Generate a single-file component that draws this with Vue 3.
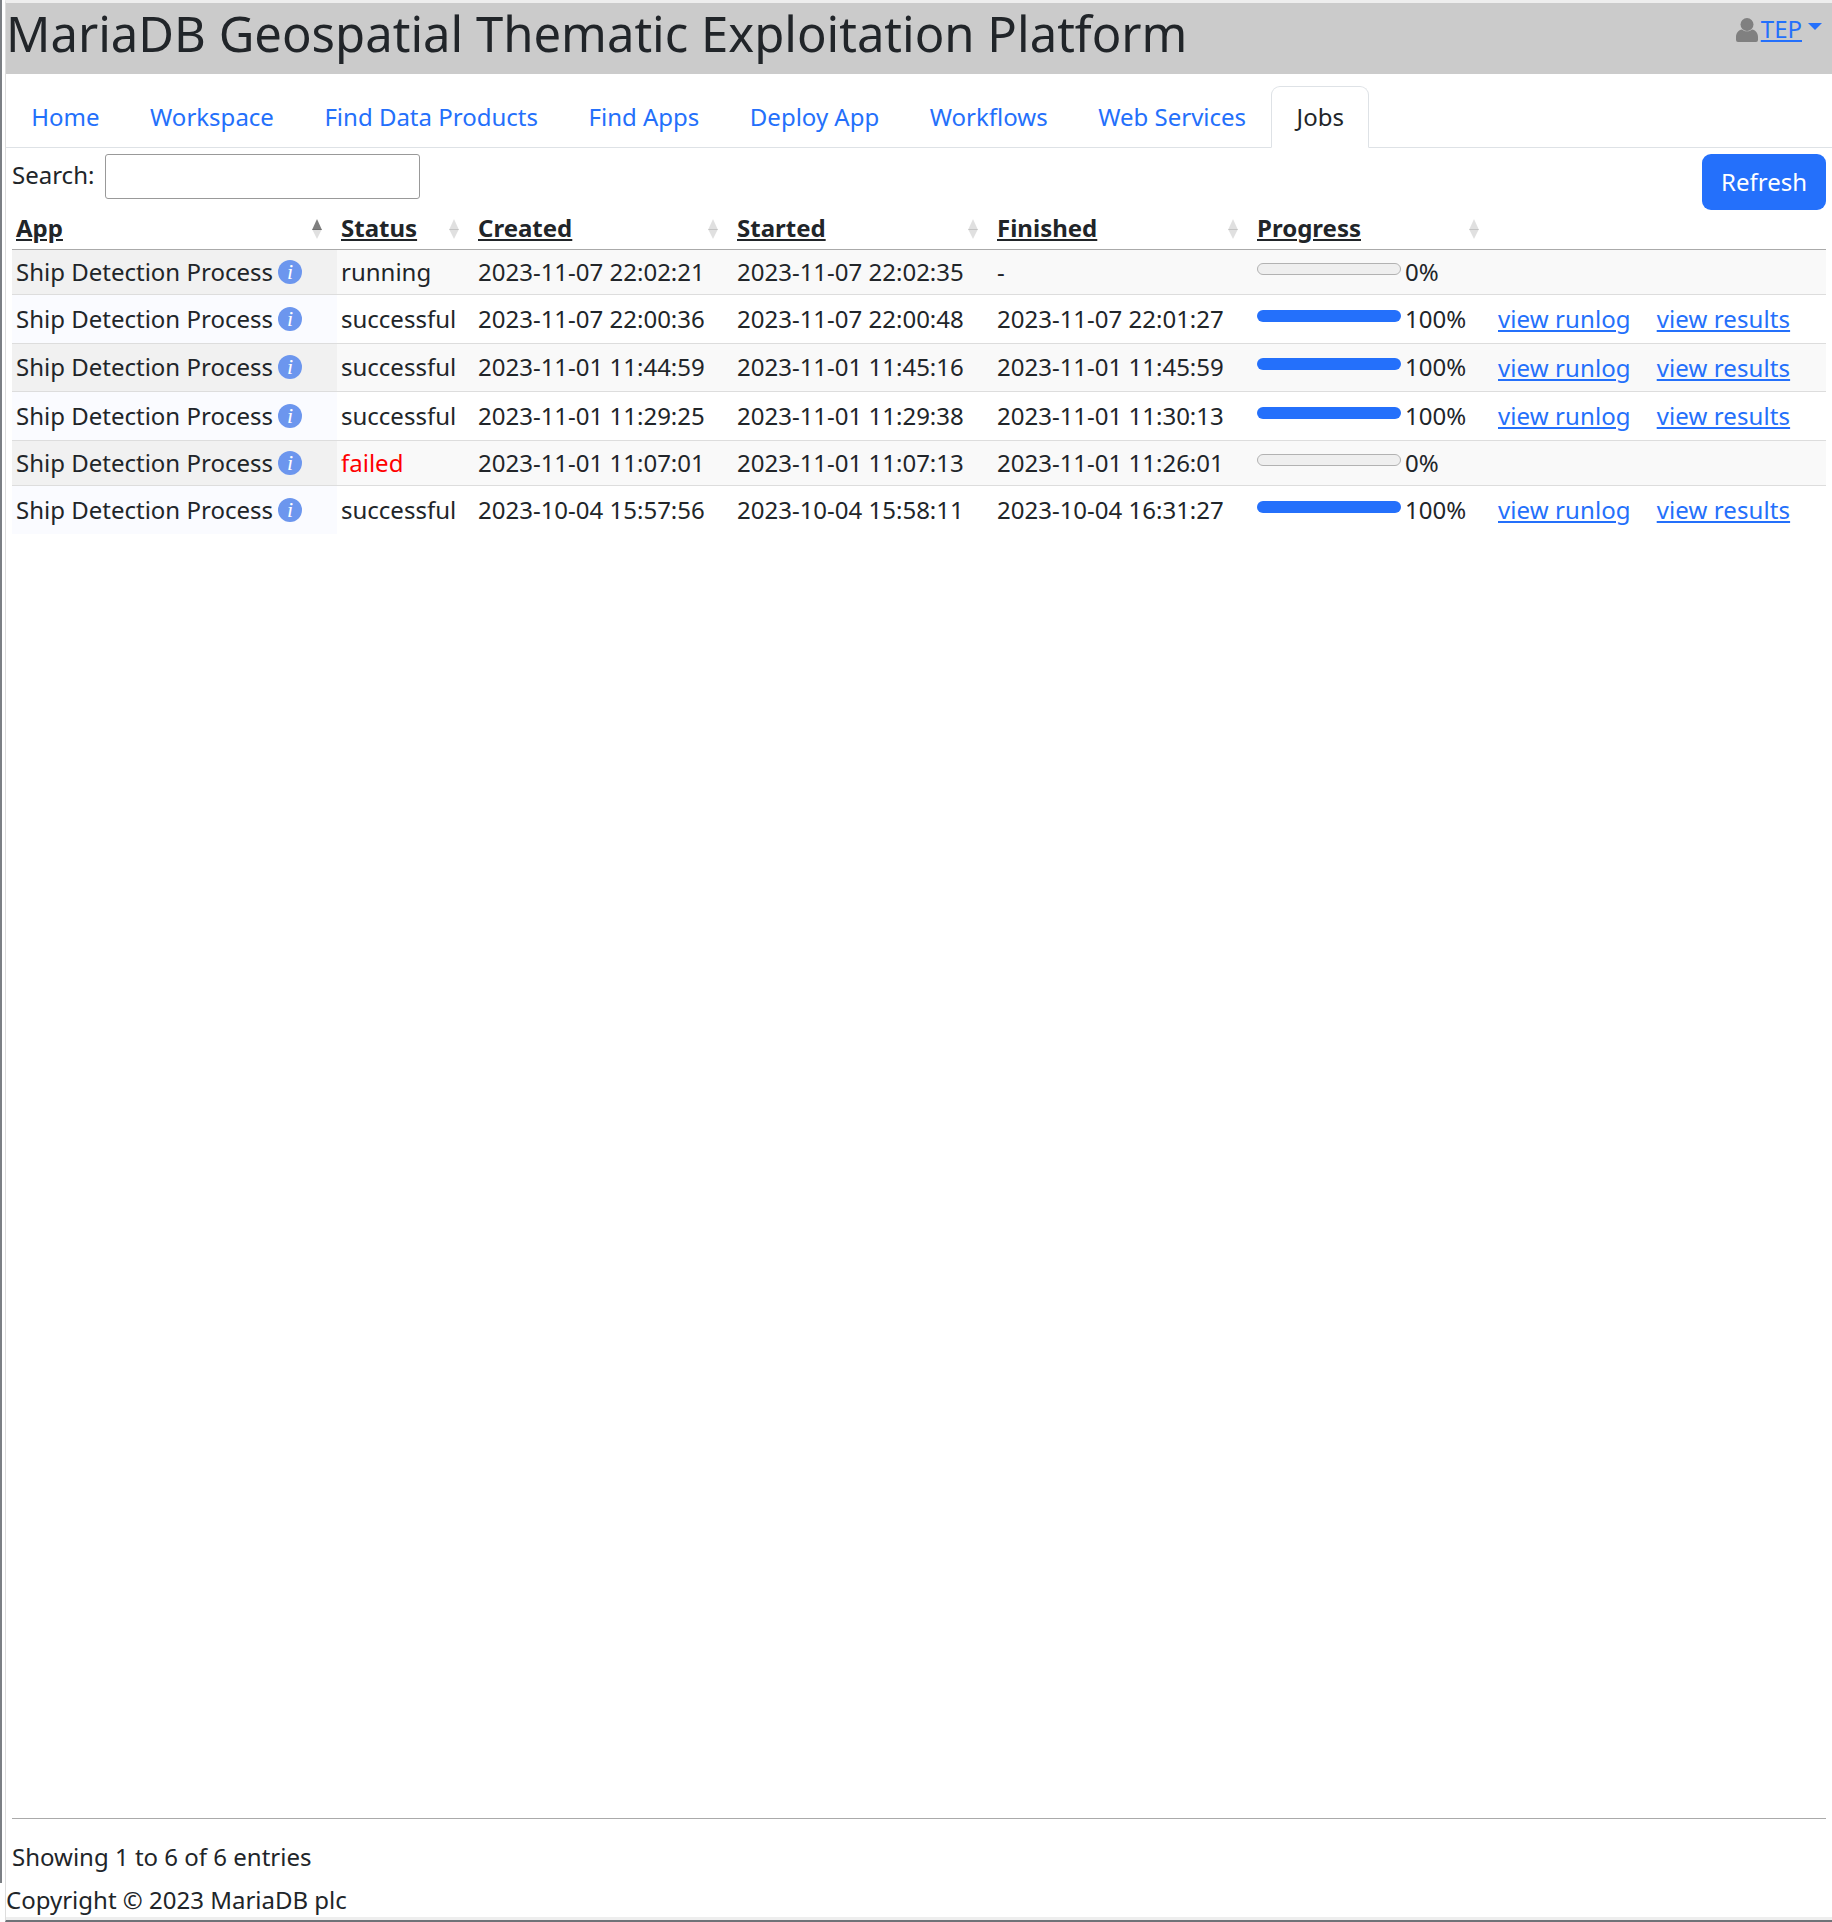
<template>
  <div class="page">
    <header class="top">
      <h1>MariaDB Geospatial Thematic Exploitation Platform</h1>
      <div class="user">
        <svg class="user-icon" viewBox="0 0 22 24" width="22" height="24" aria-hidden="true">
          <circle cx="11" cy="6.500" r="6.500" fill="#808080" />
          <path d="M0 19c0-4 2.500-7 6-7.500 1.500 1.300 3 1.800 5 1.800s3.500-.5 5-1.800c3.500.5 6 3.500 6 7.500v3a2 2 0 0 1-2 2H2a2 2 0 0 1-2-2z" fill="#808080" />
        </svg>
        <a href="#" class="user-link">TEP</a>
        <span class="caret"></span>
      </div>
    </header>

    <nav class="tabs">
      <a
        v-for="tab in tabs"
        :key="tab"
        href="#"
        class="tab"
        :class="{ active: tab === 'Jobs' }"
      >{{ tab }}</a>
    </nav>

    <main class="content">
      <div class="toolbar">
        <label class="search">
          <span class="search-label">Search:</span>
          <input type="search" />
        </label>
        <button type="button" class="refresh">Refresh</button>
      </div>

      <table class="jobs">
        <thead>
          <tr>
            <th v-for="(col, i) in columns" :key="col">
              <template v-if="col">
                <span class="th-label">{{ col }}</span>
                <span class="sort" :class="{ sorted: i === 0 }"></span>
              </template>
            </th>
          </tr>
        </thead>
        <tbody>
          <tr v-for="job in jobs" :key="job.created" :class="{ done: job.progress === 100 }">
            <td class="app">
              <span>Ship Detection Process</span>
              <span class="info">i</span>
            </td>
            <td :class="{ failed: job.status === 'failed' }">{{ job.status }}</td>
            <td>{{ job.created }}</td>
            <td>{{ job.started }}</td>
            <td>{{ job.finished }}</td>
            <td>
              <span class="bar" :class="{ empty: job.progress === 0 }"></span>
              <span class="pct">{{ job.progress }}%</span>
            </td>
            <td class="links">
              <template v-if="job.progress === 100">
                <a href="#">view runlog</a>
                <a href="#">view results</a>
              </template>
            </td>
          </tr>
        </tbody>
      </table>

      <div class="table-info">Showing 1 to 6 of 6 entries</div>
    </main>

    <footer class="copy">Copyright © 2023 MariaDB plc</footer>
  </div>
</template>

<script setup>
const tabs = ['Home', 'Workspace', 'Find Data Products', 'Find Apps', 'Deploy App', 'Workflows', 'Web Services', 'Jobs']

const columns = ['App', 'Status', 'Created', 'Started', 'Finished', 'Progress', '']

const jobs = [
  { status: 'running', created: '2023-11-07 22:02:21', started: '2023-11-07 22:02:35', finished: '-', progress: 0 },
  { status: 'successful', created: '2023-11-07 22:00:36', started: '2023-11-07 22:00:48', finished: '2023-11-07 22:01:27', progress: 100 },
  { status: 'successful', created: '2023-11-01 11:44:59', started: '2023-11-01 11:45:16', finished: '2023-11-01 11:45:59', progress: 100 },
  { status: 'successful', created: '2023-11-01 11:29:25', started: '2023-11-01 11:29:38', finished: '2023-11-01 11:30:13', progress: 100 },
  { status: 'failed', created: '2023-11-01 11:07:01', started: '2023-11-01 11:07:13', finished: '2023-11-01 11:26:01', progress: 0 },
  { status: 'successful', created: '2023-10-04 15:57:56', started: '2023-10-04 15:58:11', finished: '2023-10-04 16:31:27', progress: 100 },
]
</script>

<style>
html,
body {
  margin: 0;
  background: #fff;
}
</style>

<style scoped>
.page {
  position: relative;
  box-sizing: border-box;
  display: flex;
  flex-direction: column;
  height: 1922px;
  margin-left: 5px;
  border-top: 3px solid #eee;
  border-bottom: 2px solid #6f7378;
  border-left: 1px solid #ddd;
  color: #212529;
  font-family: "Noto Sans", sans-serif;
  font-size: 24px;
  line-height: 36px;
}

/* dark edge of the window behind the page */
.page::before {
  content: "";
  position: absolute;
  top: -3px;
  left: -6px;
  width: 2px;
  height: 1883px;
  background: #7b7f84;
}

.top {
  display: flex;
  flex-shrink: 0;
  justify-content: space-between;
  height: 71px;
  background: #cbcbcb;
}

h1 {
  margin: 0;
  font-size: 49px;
  font-weight: 400;
  line-height: 60px;
}

.user {
  display: flex;
  align-items: flex-start;
  padding: 12px 10px 0 0;
  line-height: 28px;
}

.user-icon {
  margin: 3px 3px 0 0;
}

.user-link {
  color: #2470fb;
}

.caret {
  margin: 8px 0 0 6px;
  border-top: 7px solid #2470fb;
  border-right: 7px solid transparent;
  border-left: 7px solid transparent;
}

.tabs {
  display: flex;
  flex-shrink: 0;
  box-sizing: border-box;
  height: 62px;
  margin-top: 12px;
  border-bottom: 1px solid #dee2e6;
}

.tab {
  box-sizing: border-box;
  height: 62px;
  padding: 12px 24.260px;
  border: 1px solid transparent;
  border-radius: 9px 9px 0 0;
  color: #2470fb;
  text-decoration: none;
}

.tab.active {
  border-color: #dee2e6 #dee2e6 #fff;
  color: #212529;
  background: #fff;
}

.content {
  display: flex;
  flex: 1;
  flex-direction: column;
  padding: 6px 6px 0;
}

.toolbar {
  display: flex;
  align-items: flex-start;
  justify-content: space-between;
  height: 56px;
}

.search {
  display: flex;
  gap: 11px;
  align-items: center;
}

.search-label {
  padding-bottom: 4px;
}

.search input {
  box-sizing: border-box;
  width: 315px;
  height: 45px;
  margin: 0;
  border: 1px solid #999;
  border-radius: 3px;
}

.refresh {
  width: 124px;
  height: 56px;
  padding: 0;
  border: 0;
  border-radius: 9px;
  color: #fff;
  background: #2470fb;
  font: inherit;
}

.jobs {
  width: 100%;
  border-collapse: separate;
  border-spacing: 0;
  table-layout: fixed;
}

th,
td {
  box-sizing: border-box;
  padding: 0 4px;
  white-space: nowrap;
}

th {
  position: relative;
  height: 40px;
  padding-bottom: 3px;
  border-bottom: 1px solid #aaa;
  font-weight: 700;
  text-align: left;
}

th:nth-child(1) { width: 325px; }
th:nth-child(2) { width: 137px; }
th:nth-child(3) { width: 259px; }
th:nth-child(4),
th:nth-child(5) { width: 260px; }
th:nth-child(6) { width: 241px; }

.th-label {
  text-decoration: underline;
}

.sort {
  position: absolute;
  top: 9px;
  right: 14px;
  width: 11px;
  height: 20px;
}

.sort::before,
.sort::after {
  content: "";
  position: absolute;
  left: 0;
  border-right: 5.500px solid transparent;
  border-left: 5.500px solid transparent;
}

.sort::before {
  top: 0;
  border-bottom: 11px solid rgba(0, 0, 0, 0.12);
}

.sort::after {
  top: 10px;
  border-top: 10px solid rgba(0, 0, 0, 0.12);
}

.sort.sorted::before {
  border-bottom-color: rgba(0, 0, 0, 0.5);
}

td {
  height: 45px;
  border-bottom: 1px solid #ddd;
}

tr.done td {
  height: 48.500px;
}

tr:last-child td {
  height: 48px;
  border-bottom: 0;
}

tbody tr:nth-child(odd) td {
  background: #f9f9f9;
}

tbody tr td.app {
  background: #fafbff;
}

tbody tr:nth-child(odd) td.app {
  background: #f1f1f1;
}

.info {
  display: inline-block;
  width: 24px;
  height: 24px;
  margin-left: 5px;
  border-radius: 50%;
  color: #fff;
  background: #6c96ee;
  font-family: "Liberation Serif", serif;
  font-size: 22px;
  font-style: italic;
  line-height: 24px;
  text-align: center;
  vertical-align: 2px;
}

.failed {
  color: #f00;
}

.bar {
  display: inline-block;
  box-sizing: border-box;
  width: 144px;
  height: 12px;
  border-radius: 6px;
  background: #2470fb;
  vertical-align: 6px;
}

.bar.empty {
  border: 1px solid #b2b2b2;
  background: #efefef;
}

.pct {
  margin-left: 4px;
}

.links a {
  margin-right: 26px;
  color: #2470fb;
  letter-spacing: 0.1px;
  vertical-align: -1px;
}

.table-info {
  margin-top: auto;
  padding: 20px 0 7px;
  border-top: 1px solid #aaa;
}

.copy {
  flex-shrink: 0;
  height: 38px;
  border-bottom: 3px solid #eee;
  box-sizing: border-box;
}
</style>
